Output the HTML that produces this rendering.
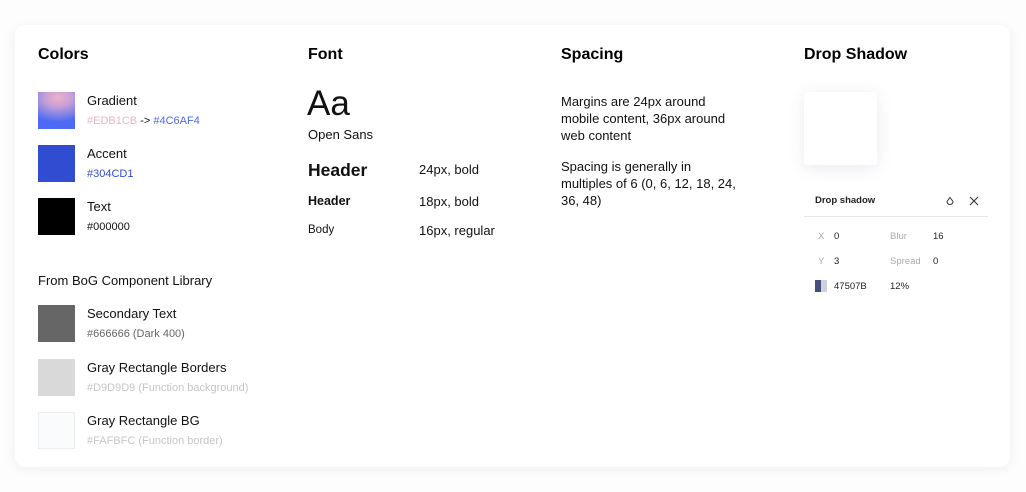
<!DOCTYPE html>
<html><head><meta charset="utf-8"><style>
*{margin:0;padding:0;box-sizing:border-box}
body{width:1026px;height:492px;background:#fdfdfd;font-family:"Liberation Sans",sans-serif;color:#111;position:relative;overflow:hidden}
.card{position:absolute;left:15px;top:25px;width:995px;height:442px;background:#fff;border-radius:10px;box-shadow:0 2px 14px rgba(0,0,0,0.06)}
.a{position:absolute;white-space:nowrap}
h2{position:absolute;font-size:16px;font-weight:bold;color:#000;white-space:nowrap}
.sw{position:absolute;left:38px;width:37px;height:37px}
.t{font-size:13px;color:#111}
.h{font-size:11px}
.s{font-size:9.5px;color:#222}
.g{font-size:9.5px;color:#aaa}
</style></head><body>
<div class="card"></div>
<h2 style="left:38px;top:46px">Colors</h2>
<h2 style="left:308px;top:46px">Font</h2>
<h2 style="left:561px;top:46px">Spacing</h2>
<h2 style="left:804px;top:46px">Drop Shadow</h2>

<div class="sw" style="top:92px;background:radial-gradient(ellipse 90% 60% at 55% 15%,#edb1cb 0%,#c7a0d6 40%,#4c6af4 110%)"></div>
<div class="a t" style="left:87px;top:93px">Gradient</div>
<div class="a h" style="left:87px;top:115px"><span style="color:#efb3cc">#EDB1CB</span> -&gt; <span style="color:#4c6af4">#4C6AF4</span></div>
<div class="sw" style="top:145px;background:#304cd1"></div>
<div class="a t" style="left:87px;top:146px">Accent</div>
<div class="a h" style="left:87px;top:168px;color:#304cd1">#304CD1</div>
<div class="sw" style="top:198px;background:#000"></div>
<div class="a t" style="left:87px;top:199px">Text</div>
<div class="a h" style="left:87px;top:221px">#000000</div>

<div class="a t" style="left:38px;top:273px">From BoG Component Library</div>
<div class="sw" style="top:305px;background:#666"></div>
<div class="a t" style="left:87px;top:306px">Secondary Text</div>
<div class="a h" style="left:87px;top:328px;color:#666">#666666 (Dark 400)</div>
<div class="sw" style="top:359px;background:#d9d9d9"></div>
<div class="a t" style="left:87px;top:360px">Gray Rectangle Borders</div>
<div class="a h" style="left:87px;top:382px;color:#c6c6c6">#D9D9D9 (Function background)</div>
<div class="sw" style="top:412px;background:#fafbfc;border:1px solid #eee"></div>
<div class="a t" style="left:87px;top:413px">Gray Rectangle BG</div>
<div class="a h" style="left:87px;top:435px;color:#c6c6c6">#FAFBFC (Function border)</div>

<div class="a" style="left:307px;top:84px;font-size:35px;font-weight:300;color:#111">Aa</div>
<div class="a t" style="left:308px;top:127px">Open Sans</div>
<div class="a" style="left:308px;top:160px;font-size:17.5px;font-weight:bold">Header</div>
<div class="a t" style="left:419px;top:162px">24px, bold</div>
<div class="a" style="left:308px;top:194px;font-size:12.5px;font-weight:bold">Header</div>
<div class="a t" style="left:419px;top:194px">18px, bold</div>
<div class="a" style="left:308px;top:224px;font-size:11.5px">Body</div>
<div class="a t" style="left:419px;top:223px">16px, regular</div>

<div class="a t" style="left:561px;top:93px;line-height:17px">Margins are 24px around<br>mobile content, 36px around<br>web content</div>
<div class="a t" style="left:561px;top:158px;line-height:17px">Spacing is generally in<br>multiples of 6 (0, 6, 12, 18, 24,<br>36, 48)</div>

<div class="a" style="left:804px;top:92px;width:73px;height:73px;background:#fff;border-radius:3px;box-shadow:0 3px 16px rgba(71,80,123,0.12)"></div>
<div class="a" style="left:815px;top:195px;font-size:9.5px;font-weight:bold;color:#222">Drop shadow</div>
<svg class="a" style="left:944px;top:195px" width="12" height="12" viewBox="0 0 12 12"><path d="M6 2.5 L9 6.5 A3 3 0 0 1 3 6.5 Z" fill="none" stroke="#333" stroke-width="1"/></svg>
<svg class="a" style="left:968px;top:195px" width="12" height="12" viewBox="0 0 12 12"><path d="M2 2 L10 10 M10 2 L2 10" stroke="#333" stroke-width="1.1"/></svg>
<div class="a" style="left:804px;top:216px;width:184px;height:1px;background:#e6e6e6"></div>
<div class="a g" style="left:818px;top:231px">X</div>
<div class="a s" style="left:834px;top:231px">0</div>
<div class="a g" style="left:890px;top:231px">Blur</div>
<div class="a s" style="left:933px;top:231px">16</div>
<div class="a g" style="left:818px;top:256px">Y</div>
<div class="a s" style="left:834px;top:256px">3</div>
<div class="a g" style="left:890px;top:256px">Spread</div>
<div class="a s" style="left:933px;top:256px">0</div>
<div class="a" style="left:815px;top:280px;width:6px;height:12px;background:#47507b"></div>
<div class="a" style="left:821px;top:280px;width:6px;height:12px;background:#cfd0dc"></div>
<div class="a s" style="left:834px;top:281px">47507B</div>
<div class="a s" style="left:890px;top:281px">12%</div>
</body></html>
